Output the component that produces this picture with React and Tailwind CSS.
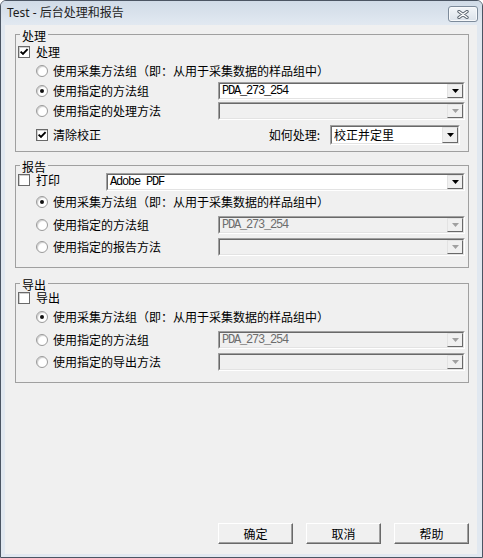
import React from 'react';

// Classic Win32 dialog: post-run processing & report settings
const CJK = "[font-family:'Noto_Sans_CJK_SC',sans-serif]";
const MONO = "[font-family:'Liberation_Mono',monospace] tracking-[-1.2px]";

function CheckBox({ checked }) {
  return (
    <span className="flex h-[12px] w-[12px] shrink-0 items-center justify-center border border-[#6a6a6a] bg-white shadow-[inset_1px_1px_0_#d0d0d0]">
      {checked && (
        <svg width="10" height="10" viewBox="0 0 10 10">
          <path d="M1.6 4.6 L4 7 L8.6 2.2" fill="none" stroke="#000" strokeWidth="1.9" />
        </svg>
      )}
    </span>
  );
}

function Radio({ on }) {
  return (
    <span className="flex h-[12px] w-[12px] shrink-0 items-center justify-center rounded-full border border-[#9a9a9a] bg-white shadow-[inset_1px_1px_1px_#cfcfcf]">
      {on && <span className="h-[4px] w-[4px] rounded-full bg-[#111]" />}
    </span>
  );
}

function Arrow({ disabled }) {
  return (
    <span className="flex w-[16px] shrink-0 items-center justify-center border border-t-[#e3e3e3] border-l-[#e3e3e3] border-b-[#696969] border-r-[#696969] bg-[#f0f0f0]">
      <svg width="7" height="4" viewBox="0 0 7 4">
        <polygon points="0,0 7,0 3.5,4" fill={disabled ? '#a0a0a0' : '#000'} />
      </svg>
    </span>
  );
}

function Combo({ value, disabled, mono, className = 'h-[18px]' }) {
  return (
    <div className={`flex min-w-0 border border-t-[#a0a0a0] border-l-[#a0a0a0] border-b-white border-r-white ${className}`}>
      <div
        className={`flex min-w-0 flex-1 border border-t-[#696969] border-l-[#696969] border-b-[#e3e3e3] border-r-[#e3e3e3] ${
          disabled ? 'bg-[#f0f0f0]' : 'bg-white'
        }`}
      >
        <span
          className={`flex flex-1 items-center truncate pl-[2px] text-[12px] ${mono ? MONO : ''} ${
            disabled ? 'text-[#6d6d6d]' : 'text-black'
          }`}
        >
          {value}
        </span>
        <Arrow disabled={disabled} />
      </div>
    </div>
  );
}

function Group({ title, className, children }) {
  return (
    <fieldset className={`min-w-0 border border-[#a0a0a0] pl-[2px] pr-[3px] ${className}`}>
      <legend className="ml-[2px] px-[2px] pt-[3px] text-[12px] leading-[12px]">{title}</legend>
      {children}
    </fieldset>
  );
}

function RadioRow({ on, label, className = 'h-[19px]', children }) {
  return (
    <div className={`flex items-center ${className}`}>
      <div className="flex w-[200px] shrink-0 items-center pl-[18px]">
        <Radio on={on} />
        <span className="ml-[5px] whitespace-nowrap text-[12px] leading-[16px]">{label}</span>
      </div>
      {children && <div className="min-w-0 flex-1">{children}</div>}
    </div>
  );
}

function Btn({ children }) {
  return (
    <button className="h-[21px] w-[75px] border border-t-white border-l-white border-b-[#696969] border-r-[#696969] bg-[#f0f0f0] text-[12px] leading-[19px] text-black shadow-[inset_-1px_-1px_0_#a0a0a0]">
      {children}
    </button>
  );
}

export default function App() {
  const group = '使用采集方法组（即：从用于采集数据的样品组中）';
  return (
    <div className={`flex h-[558px] w-[483px] flex-col overflow-hidden rounded-t-[6px] border border-[#4b5563] bg-[#e1e8f0] pb-[3px] pl-[4px] pr-[5px] text-black ${CJK}`}>
      {/* Title bar */}
      <div className="-ml-[4px] -mr-[5px] flex h-[24px] shrink-0 items-center justify-between bg-gradient-to-b from-[#d0dbe7] to-[#e2e9f1] pl-[6px] pr-[4px]">
        <span className="text-[12px] leading-[24px] text-[#1c1c1c] [font-family:'Noto_Sans','Noto_Sans_CJK_SC',sans-serif]">
          Test - 后台处理和报告
        </span>
        <button className="mt-[2px] flex h-[16px] w-[30px] items-center justify-center rounded-[3px] border border-[#7d8b9b] bg-gradient-to-b from-[#f3f6f9] to-[#dbe2ea] shadow-[inset_0_0_0_1px_#f7f9fb]">
          <svg width="12" height="9" viewBox="0 0 12 9">
            <path d="M2 1.5 L10 7.5 M10 1.5 L2 7.5" stroke="#5b6570" strokeWidth="3.4" strokeLinecap="round" />
            <path d="M2 1.5 L10 7.5 M10 1.5 L2 7.5" stroke="#ffffff" strokeWidth="1.4" strokeLinecap="round" />
          </svg>
        </button>
      </div>

      {/* Dialog body */}
      <div className="flex flex-1 flex-col bg-[#f0f0f0] pl-[10px] pr-[8px]">
        <Group title="处理" className="mt-[2px] pb-[6px]">
          <div className="mt-[2px] flex h-[16px] items-center">
            <CheckBox checked />
            <span className="ml-[6px] text-[12px] leading-[16px]">处理</span>
          </div>
          <RadioRow label={group} className="mt-[1px] h-[19px]" />
          <RadioRow on label="使用指定的方法组" className="mt-[1px] h-[19px]">
            <Combo value="PDA_273_254" mono />
          </RadioRow>
          <RadioRow label="使用指定的处理方法" className="mt-[1px] h-[19px]">
            <Combo value="" disabled />
          </RadioRow>
          <div className="mt-[5px] flex h-[20px] items-center">
            <div className="flex items-center pl-[18px]">
              <CheckBox checked />
              <span className="ml-[5px] text-[12px] leading-[16px]">清除校正</span>
            </div>
            <div className="flex-1" />
            <span className="text-[12px] leading-[16px]">如何处理:</span>
            <Combo value="校正并定里" className="ml-[10px] mr-[5px] h-[20px] w-[130px]" />
          </div>
        </Group>

        <Group title="报告" className="mt-[6px] pb-[10px]">
          <div className="flex h-[18px]">
            <div className="flex h-[14px] w-[88px] shrink-0 items-center">
              <CheckBox />
              <span className="ml-[6px] text-[12px] leading-[16px]">打印</span>
            </div>
            <div className="min-w-0 flex-1">
              <Combo value="Adobe PDF" mono />
            </div>
          </div>
          <RadioRow on label={group} className="mt-[1px] h-[20px]" />
          <RadioRow label="使用指定的方法组" className="mt-[2px] h-[21px]">
            <Combo value="PDA_273_254" mono disabled />
          </RadioRow>
          <RadioRow label="使用指定的报告方法" className="mt-[1px] h-[21px]">
            <Combo value="" disabled />
          </RadioRow>
        </Group>

        <Group title="导出" className="mt-[8px] pb-[10px]">
          <div className="flex h-[14px] items-center">
            <CheckBox />
            <span className="ml-[6px] text-[12px] leading-[16px]">导出</span>
          </div>
          <RadioRow on label={group} className="mt-[2px] h-[20px]" />
          <RadioRow label="使用指定的方法组" className="mt-[2px] h-[21px]">
            <Combo value="PDA_273_254" mono disabled />
          </RadioRow>
          <RadioRow label="使用指定的导出方法" className="mt-[1px] h-[21px]">
            <Combo value="" disabled />
          </RadioRow>
        </Group>

        <div className="flex-1" />
        <div className="flex justify-end gap-[13px] pb-[10px]">
          <Btn>确定</Btn>
          <Btn>取消</Btn>
          <Btn>帮助</Btn>
        </div>
      </div>
    </div>
  );
}
